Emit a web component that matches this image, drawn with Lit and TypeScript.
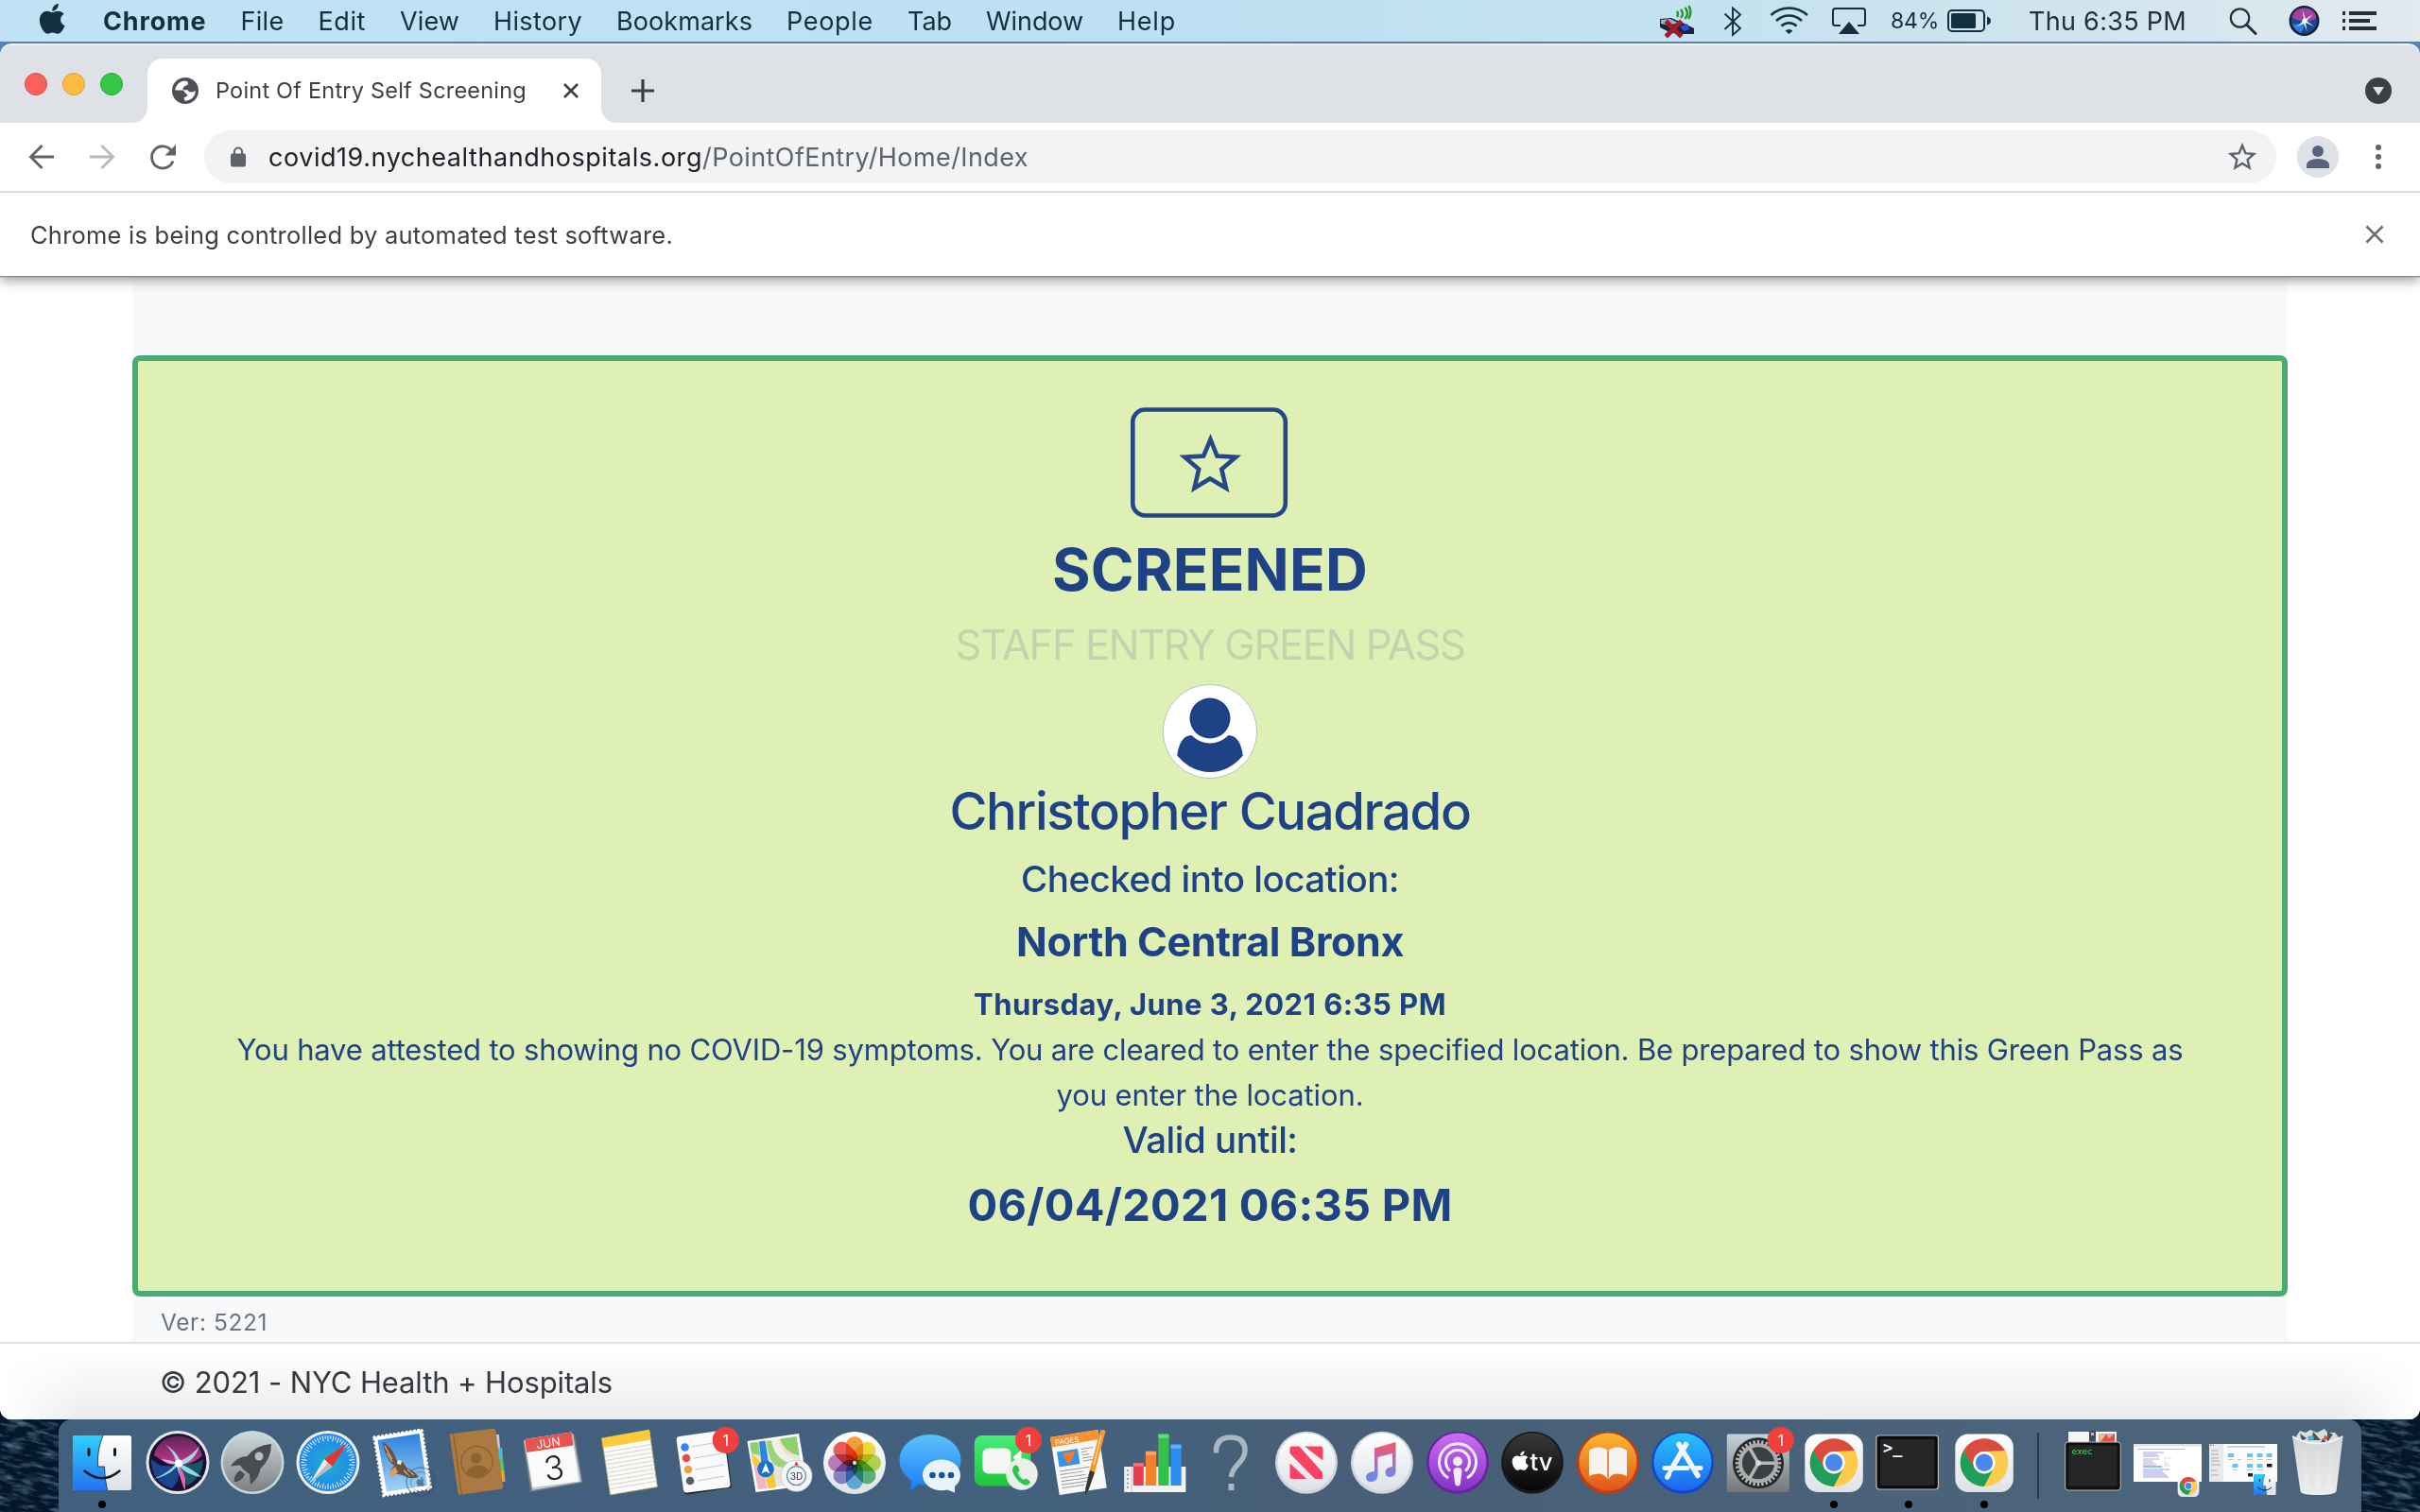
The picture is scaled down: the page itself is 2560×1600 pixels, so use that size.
import { LitElement, html, svg, css, TemplateResult, SVGTemplateResult } from "lit";
import { customElement, property } from "lit/decorators.js";

/** A single line of text whose tracking is adjusted so that it fills a given advance width. */
@customElement("fit-text")
export class FitText extends LitElement {
  @property({ type: Number }) width = 0;
  @property() text = "";

  static styles = css`
    :host { display: inline-block; white-space: pre; }
    .line { display: inline-block; white-space: pre; }
  `;

  updated() {
    const line = this.renderRoot.querySelector<HTMLElement>(".line");
    if (!line || !this.width || !this.text) return;
    line.style.letterSpacing = "0px";
    const natural = line.getBoundingClientRect().width;
    line.style.letterSpacing = `${(this.width - natural) / this.text.length}px`;
  }

  render() {
    return html`<span class="line">${this.text}</span>`;
  }
}

const fit = (text: string, width: number) => html`<fit-text .text=${text} .width=${width}></fit-text>`;

const APPLE =
  "M318.7 268.7c-.2-36.7 16.4-64.4 50-84.8-18.8-26.9-47.2-41.7-84.7-44.6-35.5-2.8-74.3 20.7-88.5 20.7-15 0-49.4-19.7-76.4-19.7C63.3 141.2 4 184.8 4 273.5q0 39.3 14.4 81.2c12.8 36.7 59 126.7 107.2 125.2 25.2-.6 43-17.9 75.8-17.9 31.8 0 48.3 17.9 76.4 17.9 48.6-.7 90.4-82.5 102.6-119.3-65.2-30.7-61.7-90-61.7-91.9zm-56.6-164.2c27.3-32.4 24.8-61.9 24-72.5-24.1 1.4-52 16.4-67.9 34.9-17.5 19.8-27.8 44.3-25.6 71.9 26.1 2 49.9-11.4 69.5-34.3z";

/* ------------------------------------------------------------------ menu bar */

@customElement("menu-bar")
export class MenuBar extends LitElement {
  private menus: [string, number][] = [
    ["File", 46], ["Edit", 50.5], ["View", 63], ["History", 94], ["Bookmarks", 144],
    ["People", 92], ["Tab", 47], ["Window", 103], ["Help", 62],
  ];

  static styles = css`
    :host {
      display: flex; align-items: center; justify-content: space-between;
      height: 44px; padding: 0 46px 0 41px; box-sizing: border-box;
      background: linear-gradient(90deg, #bfe3f4 0%, #bde0f2 50%, #c5e2ef 72%, #d3e5ee 88%, #e2e9ef 100%);
      color: #12303f; font-size: 27px; line-height: 45px;
    }
    svg { display: block; }
    .menus { display: flex; align-items: center; gap: 36px; }
    .apple { width: 28px; height: 44px; margin-right: 4px; }
    .app { font-weight: 700; }
    .status {
      display: grid; align-items: center;
      grid-template-columns: 67px 49px 66px 62px 60px 86px 212px 63px 57px 36px;
    }
    .small { font-size: 23px; }
    .right { color: #22323c; }
  `;

  render() {
    return html`
      <div class="menus">
        <svg class="apple" viewBox="0 0 28 44"><path fill="#12303f" transform="translate(.6 1.8) scale(.0707)" d=${APPLE} /></svg>
        <span class="app">${fit("Chrome", 109.5)}</span>
        ${this.menus.map(([label, w]) => html`<span>${fit(label, w)}</span>`)}
      </div>
      <div class="status">
        <svg width="36" height="44" viewBox="0 0 36 44">
          <path d="M0 20l12-1 14 6 10 5v6h-12l-12-1-12-6z" fill="#1a2440" />
          <path d="M1 21l10-1 8 4-9 3-9-2z" fill="#9db4c0" /><path d="M21 28l8-3 2 6-6 2z" fill="#2b4fd0" />
          <path d="M18 12q2 3 0 6M22 10q4 5 0 9M26.500 8q5 6 0 12M30.500 6q4 7-.5 14" fill="none" stroke="#1f9a28" stroke-width="2.400" />
          <path d="M8 24l13 13M21 24l-13 13" stroke="#a81828" stroke-width="5" stroke-linecap="square" />
        </svg>
        <svg width="20" height="44" viewBox="0 0 20 44"><path d="M1.500 14.500L18 30l-8 7V8.500l8 7L1.500 31" fill="none" stroke="#12303f" stroke-width="1.900" /></svg>
        <svg width="42" height="44" viewBox="0 0 42 44">
          <g fill="none" stroke="#12303f" stroke-width="2.600">
            <path d="M1.500 16q8.300-7.500 19-7.500T40 16" /><path d="M7 22q6-5.500 13.500-5.500T34 22" /><path d="M12.500 27.500q3.500-3.300 8-3.300t8 3.300" />
          </g>
          <path d="M16.500 32.500q4-3 8 0l-4 3.500z" fill="#12303f" />
        </svg>
        <svg width="36" height="44" viewBox="0 0 36 44">
          <path d="M9 27H3.500Q1 27 1 24.500V11.500Q1 9 3.500 9H32.500Q35 9 35 11.500V24.500Q35 27 32.500 27H27" fill="none" stroke="#12303f" stroke-width="2" />
          <path d="M18 23L29 36H7z" fill="#12303f" />
        </svg>
        <span class="small">${fit("84%", 51)}</span>
        <svg width="46" height="44" viewBox="0 0 46 44">
          <rect x="1" y="11" width="38" height="22" rx="4" fill="none" stroke="#12303f" stroke-width="2" />
          <rect x="4" y="14" width="26" height="16" rx="1.500" fill="#12303f" /><path d="M42 17.500q4 1 4 4.500t-4 4.500z" fill="#12303f" />
        </svg>
        <span class="right">${fit("Thu 6:35 PM", 167)}</span>
        <svg width="30" height="44" viewBox="0 0 30 44"><circle cx="11.500" cy="19" r="9.700" fill="none" stroke="#22323c" stroke-width="2.200" /><path d="M18.500 26l9.500 9.500" stroke="#22323c" stroke-width="3" stroke-linecap="round" /></svg>
        <svg width="33" height="44" viewBox="0 0 33 44">
          <circle cx="16.500" cy="22" r="16" fill="#16203a" /><circle cx="16.500" cy="22" r="13.500" fill="#1d4690" />
          <path d="M3.500 18Q6 8.500 16.500 8.500T29.500 18Q25 24 16.500 22Q9 23 3.500 18z" fill="#a4409f" />
          <path d="M4 25Q12 27 17 22Q17 29 13 35Q6 32 4 25z" fill="#2f7fd6" />
          <path d="M6.500 29Q14 25 16 20L14.500 10L18 20L26 15L19 22L27 28L18 24L19.500 33L16 25z" fill="#c9f1fb" />
          <circle cx="17" cy="22" r="2.500" fill="#fff" />
        </svg>
        <svg width="36" height="44" viewBox="0 0 36 44" fill="#22303a">
          <path d="M0 12h3v4H0zM7 12h29v4H7zM0 20h3v4H0zM7 20h22v4H7zM0 28h3v4H0zM7 28h29v4H7z" />
        </svg>
      </div>
    `;
  }
}

/* ------------------------------------------------------------ browser chrome */

@customElement("browser-chrome")
export class BrowserChrome extends LitElement {
  static styles = css`
    :host { display: block; color: #3c4043; position: relative; z-index: 1; }
    svg { display: block; flex: none; }
    .strip {
      display: flex; align-items: flex-end; height: 84px; box-sizing: border-box;
      background: #dee1e6; border-radius: 12px 12px 0 0; box-shadow: inset 0 2px 0 #eff1f4;
    }
    .lights { display: flex; gap: 16px; padding: 0 10px 29px 26px; }
    .light { width: 24px; height: 24px; border-radius: 50%; box-sizing: border-box; }
    .red { background: #fc605b; border: 1px solid #e2473f; }
    .amber { background: #fdbc40; border: 1px solid #dfa032; }
    .green { background: #34c748; border: 1px solid #24a732; }
    .flare { width: 16px; height: 16px; }
    .flare.l { background: radial-gradient(circle at 0 0, #dee1e6 15.500px, #fff 16.200px); }
    .flare.r { background: radial-gradient(circle at 100% 0, #dee1e6 15.500px, #fff 16.200px); }
    .tab {
      display: flex; align-items: center; width: 480px; height: 68px; box-sizing: border-box;
      padding: 0 24px 0 26px; background: #fff; border-radius: 16px 16px 0 0; font-size: 23.500px;
    }
    .title { flex: 1; padding-left: 18px; line-height: 66px; margin-top: -1px; }
    .plus { padding: 0 0 22px 16px; }
    .search { margin-left: auto; padding: 0 30px 20px 0; }
    .toolbar {
      display: flex; align-items: center; gap: 36px; height: 72px; padding: 0 30px 0 30px;
      background: #fff; border-bottom: 2px solid #dadce0;
    }
    .omnibox {
      display: flex; align-items: center; flex: 1; height: 56px; margin-left: -6px;
      margin-right: -14px; padding: 0 20px 0 28px; border-radius: 28px;
      background: #f1f3f4; box-sizing: border-box; font-size: 27px; color: #202124;
    }
    .url { flex: 1; display: flex; padding-left: 24px; }
    .path { color: #5f6368; }
    .avatar { margin-right: -8px; }
    .infobar {
      display: flex; align-items: center; justify-content: space-between; height: 88px;
      padding: 0 38px 0 32px; background: #fff; font-size: 25.500px; box-sizing: border-box;
      box-shadow: 0 1px 1px #858585, 0 4px 12px rgba(0, 0, 0, .42);
      clip-path: inset(0 0 -20px 0);
    }
  `;

  render() {
    return html`
      <div class="strip">
        <div class="lights"><i class="light red"></i><i class="light amber"></i><i class="light green"></i></div>
        <i class="flare l"></i>
        <div class="tab">
          <svg width="28" height="28" viewBox="0 0 28 28">
            <circle cx="14" cy="14" r="14" fill="#4d5156" />
            <path d="M3.400 13.600C3.600 8 8 4 13 3.400L16.300 4.200C17.800 7 16.500 8.400 14 8.600L13.600 9.200Q11.500 9.600 11.300 13.200H16.500Q17.300 15.500 20 15.600Q22 15.600 24.700 14C24.600 20 20.500 24.600 13.500 24.700L12.600 21.300Q16.300 20.500 16.500 18.300Q14.500 17.500 13.500 15.500Q12.500 13.800 10.500 13.600z" fill="#fff" />
          </svg>
          <span class="title">${fit("Point Of Entry Self Screening", 329)}</span>
          <svg width="16" height="16" viewBox="0 0 16 16"><path d="M1 1l14 14M15 1L1 15" stroke="#3c4043" stroke-width="2.600" /></svg>
        </div>
        <i class="flare r"></i>
        <div class="plus"><svg width="24" height="24" viewBox="0 0 24 24"><path d="M12 0v24M0 12h24" stroke="#3c4043" stroke-width="3.200" /></svg></div>
        <div class="search"><svg width="28" height="28" viewBox="0 0 28 28"><circle cx="14" cy="14" r="14" fill="#3c4043" /><path d="M8 10h12l-6 9z" fill="#dee1e6" /></svg></div>
      </div>
      <div class="toolbar">
        <svg width="28" height="28" viewBox="0 0 28 28"><path d="M27 14H3M14.500 2L2.500 14l12 12" fill="none" stroke="#5f6368" stroke-width="2.800" /></svg>
        <svg width="28" height="28" viewBox="0 0 28 28"><path d="M1 14h24M13.500 2l12 12-12 12" fill="none" stroke="#bababa" stroke-width="2.800" /></svg>
        <svg width="28" height="28" viewBox="0 0 28 28"><path d="M23.500 7.500A11.600 11.600 0 1 0 25 18.500" fill="none" stroke="#5f6368" stroke-width="2.800" /><path d="M28 1v11.500H16.500z" fill="#5f6368" /></svg>
        <div class="omnibox">
          <svg width="16" height="24" viewBox="0 0 16 24"><rect y="8.500" width="16" height="14" rx="2" fill="#5f6368" /><path d="M4 9V6.500a4 4 0 0 1 8 0V9" fill="none" stroke="#5f6368" stroke-width="2" /></svg>
          <div class="url"><span>${fit("covid19.nychealthandhospitals.org", 459)}</span><span class="path">${fit("/PointOfEntry/Home/Index", 345)}</span></div>
          <svg width="32" height="32" viewBox="0 0 32 32"><path d="M16 4l3.400 8.200 8.900.8-6.700 5.900 2 8.700L16 23l-7.600 4.600 2-8.700L3.700 13l8.900-.8z" fill="none" stroke="#5f6368" stroke-width="2.400" /></svg>
        </div>
        <svg class="avatar" width="44" height="44" viewBox="0 0 44 44"><circle cx="22" cy="22" r="22" fill="#dee1e6" /><circle cx="22" cy="16" r="6" fill="#56627a" /><path d="M10 34v-3.500Q11 24 22 24t12 6.500V34z" fill="#56627a" /></svg>
        <svg width="28" height="28" viewBox="0 0 28 28" fill="#5f6368"><circle cx="14" cy="4" r="3" /><circle cx="14" cy="14" r="3" /><circle cx="14" cy="24" r="3" /></svg>
      </div>
      <div class="infobar">
        ${fit("Chrome is being controlled by automated test software.", 680)}
        <svg width="20" height="20" viewBox="0 0 20 20"><path d="M1.500 1.500l17 17M18.500 1.500l-17 17" stroke="#6b6f73" stroke-width="2.600" /></svg>
      </div>
    `;
  }
}

/* ---------------------------------------------------------------- green pass */

@customElement("green-pass")
export class GreenPass extends LitElement {
  static styles = css`
    :host { display: flex; flex-direction: column; flex: 1; min-height: 0; background: #fff; }
    .container {
      display: flex; flex-direction: column; flex: none; width: 2280px; height: 1128px; margin: 0 auto;
      padding-top: 84px; box-sizing: border-box; background: #f8f9fb;
    }
    .card {
      display: flex; flex-direction: column; align-items: center; flex: none; height: 996px;
      box-sizing: border-box; padding-top: 49px; border: 6px solid #4cab75;
      border-radius: 8px; background: #dff0b5; color: #1f4287; text-align: center;
    }
    svg { display: block; flex: none; }
    .screened { margin-top: 17px; font-size: 62px; font-weight: 700; line-height: 76px; }
    .kind { font-size: 43.500px; line-height: 83px; color: #c0d4ae; }
    .name { font-size: 54.500px; font-weight: 500; line-height: 68px; }
    .label { font-size: 38.500px; font-weight: 500; line-height: 76px; }
    .place { font-size: 43px; font-weight: 700; line-height: 56px; }
    .when { margin-top: 14px; font-size: 31px; font-weight: 700; line-height: 49px; }
    .note { font-size: 31px; line-height: 48px; }
    .valid { font-size: 38.500px; font-weight: 500; line-height: 46px; }
    .until { font-size: 47px; font-weight: 700; line-height: 92px; }
    .version { height: 48px; padding-left: 30px; font-size: 24.500px; line-height: 54px; color: #6c757d; }
    .footer {
      flex: 1; padding-left: 169px; border-top: 2px solid #dee2e6; color: #343a40;
      font-size: 31px; line-height: 81px; border-radius: 0 0 12px 12px;
      background:
        linear-gradient(90deg, #fff, rgba(255, 255, 255, 0) 90px, rgba(255, 255, 255, 0) calc(100% - 90px), #fff),
        linear-gradient(#fff 10%, #f7f7f7 45%, #ebebeb 100%);
    }
  `;

  render() {
    return html`
      <div class="container">
        <div class="card">
          <svg width="168" height="117" viewBox="0 0 168 117">
            <rect x="2.300" y="2.500" width="161.500" height="112" rx="13" fill="none" stroke="#26468a" stroke-width="4.600" />
            <path d="M84.500 34l7 17.500 19.800 1.200-15 12.800 4.700 20L84 75.500 67.500 85.500l4.700-20-15-12.800 20-1.200z" fill="none" stroke="#26468a" stroke-width="4.600" />
          </svg>
          <div class="screened">${fit("SCREENED", 334)}</div>
          <div class="kind">${fit("STAFF ENTRY GREEN PASS", 539)}</div>
          <svg width="100" height="100" viewBox="0 0 100 100">
            <circle cx="50" cy="50" r="49.600" fill="#fff" stroke="#8ea0a8" stroke-width=".6" />
            <ellipse cx="50" cy="36" rx="21.500" ry="21.500" fill="#1f4287" />
            <path d="M30.500 54Q39 62.500 50 62.500T69.500 54Q82 54.500 84.800 75.500Q70 93 50 93T15.200 75.500Q18 54.500 30.500 54z" fill="#1f4287" />
          </svg>
          <div class="name">${fit("Christopher Cuadrado", 551)}</div>
          <div class="label">${fit("Checked into location:", 400)}</div>
          <div class="place">${fit("North Central Bronx", 410)}</div>
          <div class="when">${fit("Thursday, June 3, 2021 6:35 PM", 500)}</div>
          <div class="note">${fit("You have attested to showing no COVID-19 symptoms. You are cleared to enter the specified location. Be prepared to show this Green Pass as", 2059)}</div>
          <div class="note">${fit("you enter the location.", 325)}</div>
          <div class="valid">${fit("Valid until:", 185)}</div>
          <div class="until">${fit("06/04/2021 06:35 PM", 513)}</div>
        </div>
        <div class="version">${fit("Ver: 5221", 113)}</div>
      </div>
      <div class="footer">${fit("© 2021 - NYC Health + Hospitals", 479)}</div>
    `;
  }
}

/* ---------------------------------------------------------------------- dock */

interface DockItem {
  art: SVGTemplateResult;
  running?: boolean;
}

const finderFace = svg`
  <rect x="9" y="17" width="62" height="58" rx="2.500" fill="url(#white)" />
  <path d="M11.500 17H41C36 29 35 40 35.500 50H42.500Q42.500 62 45.500 75H11.500Q9 75 9 72.500V19.500Q9 17 11.500 17z" fill="url(#sky)" />
  <path d="M41 17C36 29 35 40 35.500 50H42.500Q42.500 62 45.500 75" fill="none" stroke="#2a3f55" stroke-width="1" />
  <path d="M26 31.500v6M53.500 31.500v6" stroke="#101820" stroke-width="3" stroke-linecap="round" />
  <path d="M21.500 54.500Q40 70 58.500 54.500" fill="none" stroke="#101820" stroke-width="2.400" stroke-linecap="round" />`;

const chromeMark = svg`
  <rect x="9.300" y="15.500" width="61.500" height="61.500" rx="14" fill="url(#white)" />
  <circle cx="40" cy="45.700" r="25.300" fill="#fdcb4b" />
  <path d="M18.100 33A25.300 25.300 0 0 1 61.900 33L40 34L29 52z" fill="#db4b40" />
  <path d="M18.100 33A25.300 25.300 0 0 0 40 71L51 52L40 56L30 51.700z" fill="#1f9d5b" />
  <path d="M40 34.200H62.500A25.300 25.300 0 0 1 40 71L50 51.500z" fill="#fdcb4b" />
  <circle cx="40" cy="45.700" r="11.700" fill="#fff" /><circle cx="40" cy="45.700" r="9.200" fill="#4a86ec" />`;

const badge = (x: number) => svg`
  <circle cx=${x} cy="22" r="14" fill="#f0403d" />
  <text x=${x} y="27.700" font-size="16" fill="#fff" text-anchor="middle">1</text>`;

const disc = (fill: string, rim: string) => svg`
  <circle cx="40" cy="45.700" r="33" fill=${rim} /><circle cx="40" cy="45" r="30.500" fill=${fill} />`;

const petals = ["#f9a13a", "#f6e13b", "#bfdc52", "#63c07f", "#6bb6e6", "#8f8fd0", "#c784bf", "#f1605a"];

const ticks = Array.from({ length: 60 }, (_, i) => i * 6);
const teeth = Array.from({ length: 32 }, (_, i) => i * 11.25);

const rows = (x: number, y: number, n: number, step: number, w: number, color: string) =>
  Array.from({ length: n }, (_, i) => svg`<path d="M${x} ${y + i * step}h${w - ((i * 7) % 9)}" stroke=${color} stroke-width="1" />`);

const items: DockItem[] = [
  { running: true, art: finderFace },
  {
    art: svg`
      <circle cx="40" cy="45.500" r="33.500" fill="#e8e6ea" /><circle cx="40" cy="45.500" r="30.500" fill="#191333" />
      <path d="M15 38Q20 18 42 17.500Q60 19 66 38Q54 50 41 47Q26 46 15 38z" fill="url(#siriPink)" />
      <path d="M12 42Q24 54 40 47Q45 62 34 73Q12 67 12 42z" fill="#1c4f9c" opacity=".85" />
      <path d="M40 46Q58 50 67 42Q66 62 50 70Q46 58 40 46z" fill="#1b6f86" opacity=".7" />
      <path d="M14.500 63Q32 56 38.500 46Q36 34 26 26Q39 34 42.500 44Q56 38 63 28Q58 44 45 48Q56 53 65 61Q50 59 42 50Q50 62 47.500 74Q43 62 39 50Q30 60 14.500 63z" fill="#9fe9ee" opacity=".9" />
      <path d="M41 49Q51 62 47.500 75Q42 62 41 49z" fill="#f05fae" /><path d="M22 42Q34 43 41 46.500Q32 50 22 42z" fill="#e6d6ff" opacity=".8" /><circle cx="41" cy="46.500" r="4" fill="#fff" />`,
  },
  {
    art: svg`
      <circle cx="40" cy="45.500" r="33.500" fill="#c9d8dc" /><circle cx="40" cy="45.500" r="31" fill="url(#steel)" />
      <path d="M60 26Q44 27 34.500 39Q24 39 17 49.500L27 48.500L30 52.500L37 58L38 69Q47 62 48.500 52Q60 42 60 26z" fill="#4a4c4f" />
      <circle cx="47" cy="39" r="4.500" fill="#b2bec1" /><path d="M27 54Q20 58 21 66Q29 66 32 58z" fill="#4a4c4f" />`,
  },
  {
    art: svg`
      <circle cx="40" cy="45.500" r="33.500" fill="#eef0f2" /><circle cx="40" cy="45.500" r="30.500" fill="url(#safari)" />
      ${ticks.map((a) => svg`<path d="M40 17V${a % 12 ? 20.5 : 23}" stroke="#d8f0ff" stroke-width="1.100" transform="rotate(${a} 40 45.500)" />`)}
      <path d="M60.500 25L44.500 50L36 42z" fill="#e8332f" /><path d="M21 67L44.500 50L36 42z" fill="#eceef0" /><path d="M21 67L44.500 50L40 46z" fill="#b5bcc2" />`,
  },
  {
    art: svg`
      <path d="M9 19L59 11L68.500 73L19 80.500z" fill="#fff" stroke="#fff" stroke-width="3.400" stroke-dasharray="0.100 4.200" stroke-linecap="round" />
      <path d="M12.500 22L56.500 15L65 70L22 76.500z" fill="url(#mail)" />
      <path d="M18 24Q26 28 30 37L34 46Q36 43 39 45L43 51Q52 55 56 61Q48 64 41 60L35 58L29 58L26 54L30 49Q20 42 18 24z" fill="#6d5340" />
      <path d="M20 28q4 8 8 14M22 36l6 9M44 53l7 6M40 54l6 6" stroke="#cdbb9f" stroke-width="1.200" />
      <path d="M24 56L31 50L34 56L28 61z" fill="#d8a05a" /><path d="M34 43l4 1-1 4-4-1z" fill="#f2f2ee" />
      <circle cx="58" cy="66" r="15" fill="none" stroke="#334a63" stroke-width="1.600" opacity=".45" /><circle cx="58" cy="66" r="10.500" fill="none" stroke="#334a63" stroke-width="1" opacity=".4" />
      <path fill="#334a63" opacity=".6" transform="translate(53.500 60) scale(.023)" d=${APPLE} />`,
  },
  {
    art: svg`
      <path d="M56 16h6l1 15h-6z" fill="#c9cdd0" /><path d="M58 30h7l1 12h-7z" fill="#4db9dc" /><path d="M59 42h7l1.500 12h-7z" fill="#4fc66a" /><path d="M60 54h7.500l1 12h-7z" fill="#f0a02c" />
      <path d="M9.600 17Q9.600 15.500 11 15.300L55 9.800Q58 9.500 58.500 12.500L66 70Q66.500 73 64 73.700L21 79.700Q18.800 80 18.500 77.500z" fill="#ab7a42" />
      <path d="M13.500 15L22.500 79.500" stroke="#8f6331" stroke-width="1.400" />
      <circle cx="38.500" cy="45" r="16.500" fill="none" stroke="#8d6332" stroke-width="1.500" /><circle cx="37.500" cy="41" r="5.700" fill="#8d6332" /><path d="M27 56.500Q29.500 49.500 38.500 49T51 54.500Q40 67 27 56.500z" fill="#8d6332" />`,
  },
  {
    art: svg`
      <path d="M7.500 24L62 16L70.500 67L15 77z" fill="#6f7b84" /><path d="M8 22L60 15L69 66L17 75z" fill="#c4c9cd" />
      <path d="M9 21L58.500 13.500L66.500 65.500L17.500 72z" fill="#fafafa" /><path d="M9 21L58.500 13.500L60.500 27.500L11.300 35z" fill="#e8524f" />
      <g transform="rotate(-8 38 44)"><text x="36.500" y="29" font-size="12.500" fill="#fff" text-anchor="middle">JUN</text><text class="thin" x="39" y="64" font-size="35" fill="#222" text-anchor="middle">3</text></g>`,
  },
  {
    art: svg`
      <path d="M11.500 20L61.900 11L70.500 71.500L20.500 80z" fill="#fbfbf7" stroke="#a99a55" stroke-width=".8" />
      <path d="M11.500 20L61.900 11L63.300 21.500L13 30z" fill="#fbcb3c" />
      ${Array.from({ length: 10 }, (_, i) => svg`<path d="M${14 + i * 0.65} ${35 + i * 4.3}L${64 + i * 0.65} ${26.5 + i * 4.3}" stroke="#cfcfcb" stroke-width=".9" />`)}`,
  },
  {
    art: svg`
      <path d="M12 24L62 18L69 72L23 79.500Q19 80 18.500 76z" fill="#23262b" />
      <path d="M10.600 22Q10.300 18.500 13.500 18L56 12Q60 11.500 60.500 15L67.500 68Q68 71.500 65 72L22 77.500Q18.500 78 18 74.500z" fill="#fafafa" />
      <circle cx="19.500" cy="29.500" r="4.300" fill="#3a82f6" /><circle cx="21" cy="41" r="4.300" fill="#e94f49" /><circle cx="23" cy="53" r="4.300" fill="#f0a040" /><circle cx="25" cy="65" r="4.300" fill="#5a5f69" />
      <path d="M27 29l22-4M29 41l30-5M30.500 53l30-5M32.500 65l29-5" stroke="#c7c9cc" stroke-width="1.200" />${badge(62.7)}`,
  },
  {
    art: svg`
      <path d="M5.500 23L60 15L69.500 70L14.500 77z" fill="#fff" />
      <path d="M8 25L57.500 18L66 67L16.500 74z" fill="#e9e4d8" />
      <path d="M40 20.500L57.500 18L60.500 38Q46 36 40 20.500z" fill="#8fd06d" /><path d="M8 25L17 24L19 38L10 36z" fill="#8fd06d" /><path d="M26 23l9-1.300Q38 40 55 44l8 1 2 10L38 50Q28 46 26 23z" fill="#97d578" />
      <path d="M31 22l7-1Q42 40 61 43l1 6Q34 46 31 22z" fill="#f3f0e8" />
      <path d="M10 36l24 22 2 14-8 1L24 58 11 46z" fill="#f8c73a" /><path d="M12 46l12 14 2 13-9 1z" fill="#f4b4c4" />
      <path d="M18 23.500l6.500-1 4.500 30h-8z" fill="#2a87dd" /><circle cx="25" cy="52.500" r="8.800" fill="#1671cf" /><path d="M25 46l4.500 11.500L25 55l-4.500 2.500z" fill="#fff" />
      <circle cx="57.500" cy="59.700" r="16.500" fill="#f3f5f6" stroke="#c3c9ce" stroke-width=".8" /><circle cx="57.500" cy="59.700" r="10" fill="none" stroke="#5e8da6" stroke-width="1.200" />
      <path d="M57.500 44.500l2.300 4h-4.600z" fill="#e02b2b" /><text x="57.500" y="63.600" font-size="10" fill="#30353a" text-anchor="middle">3D</text>`,
  },
  {
    art: svg`
      <circle cx="40" cy="46" r="33" fill="url(#white)" />
      ${petals.map((c, i) => svg`<rect class="petal" x="31" y="18" width="18" height="29" rx="9" fill=${c} transform="rotate(${i * 45} 40 46)" />`)}
      <circle cx="40" cy="46" r="2" fill="#fff" />`,
  },
  {
    art: svg`
      <path d="M40 16C58 16 72.500 28 72.500 43S58 70 40 70Q33 70 28 68Q24 73 18 75Q21 70 20 64.500Q7.500 56 7.500 43C7.500 28 22 16 40 16z" fill="url(#msg)" />
      <path d="M52 42.500C63 42.500 72 49.500 72 59Q72 66 66 71L66 77.500L58 74.500Q56 75.300 52 75.300C41 75.300 32 68 32 59S41 42.500 52 42.500z" fill="#e9f3fb" />
      <circle cx="42.500" cy="59" r="3.300" fill="#17529c" /><circle cx="52.300" cy="59" r="3.300" fill="#17529c" /><circle cx="62" cy="59" r="3.300" fill="#17529c" />`,
  },
  {
    art: svg`
      <rect x="6.800" y="17" width="59.500" height="53.500" rx="8" fill="url(#green)" /><rect x="15.500" y="30.500" width="30" height="27" rx="6" fill="#f3f6f3" />
      <path d="M47.500 40l9-8v20z" fill="#f3f6f3" /><circle cx="57" cy="58" r="16.800" fill="#e9efe9" />
      <path d="M48 50q3-3 5 0l1.500 4-2 2.500q2 5 6 7.500l3-1.500 3.500 2.500q2 2-1 4-3 2-8-1.500-6-5-8.500-11.500-1-4 .5-6z" fill="#27c94b" />${badge(64)}`,
  },
  {
    art: svg`
      <path d="M8 19L58.500 11L67.800 72.500L17.700 80z" fill="#f8f8f8" /><path d="M8 19L58.500 11L60 21L9.700 29.500z" fill="#f9922e" />
      <text transform="rotate(-8.500 13 27)" x="13.500" y="27.500" font-size="8" fill="#fff">PAGES</text>
      <path d="M15 34.500L37 31L39.500 47L17.500 50.500z" fill="#3794e2" /><path d="M21 36q7-2 13-2-1 8-7 13-4-5-6-11z" fill="#f5792c" />
      <g transform="rotate(-8.500 18 56)">${rows(18, 55, 6, 3.6, 32, "#9a9a9a")}${rows(44, 35, 5, 3.2, 13, "#9a9a9a")}</g>
      <path d="M61 11.500q4-1.500 5.500 1L54 60l-6 16-3.500 5 1-9L49 56z" fill="#f2982e" /><path d="M50 54l5 2-7 20-3.500 5 1-9z" fill="#33363a" /><path d="M62 17l-8 31" stroke="#ffd69a" stroke-width="1.400" />`,
  },
  {
    art: svg`
      <rect x="6.200" y="50" width="65.200" height="27" fill="#f2f2f2" /><path d="M14 50v27" stroke="#c8c8c8" /><path d="M9 54h2M9 58.500h2M9 63h2M9 67.500h2M9 72h2" stroke="#888" stroke-width="1.300" />
      <rect x="15.800" y="45.700" width="11" height="24.300" rx="1" fill="#e63b52" /><rect x="28.900" y="33.500" width="11.300" height="36.500" rx="1" fill="#f1812b" />
      <rect x="42.300" y="15" width="11.300" height="55" rx="1" fill="#32c24c" /><rect x="55.400" y="26" width="11.300" height="44" rx="1" fill="#2b8df2" />
      <path d="M15.800 48h11M28.900 36h11.300M42.300 18h11.300M55.400 29h11.300" stroke="#fff" stroke-width="3.500" opacity=".3" />`,
  },
  {
    art: svg`
      <path d="M23.500 35.500V33Q24 19 39 19T54 33Q54 40 47 47T39.500 61" fill="none" stroke="#aab6c1" stroke-width="5.500" /><rect x="36.500" y="68" width="6" height="7" fill="#aab6c1" />`,
  },
  {
    art: svg`${disc("url(#white)", "#cfd5db")}
      <path d="M24.500 28.500h8L57 56v7h-8L22.500 36v-5.500q0-2 2-2z" fill="#fb4265" /><path d="M38 28.500h17q2.500 0 2.500 2.500v12.500zM22.500 46.500L40.500 63H24.500q-2 0-2-2z" fill="#fb4265" />`,
  },
  {
    art: svg`${disc("url(#white)", "#cfd5db")}
      <path d="M32 30.500L54.500 24V54Q54.500 61 48.500 61Q43.500 61 43.500 56Q43.500 51 51 50V36L35.500 40V59Q35 66 28.500 66Q23 66 23 61Q23 56 32 55z" fill="url(#tune)" />`,
  },
  {
    art: svg`${disc("url(#violet)", "#64249b")}
      <g fill="none" stroke="#f4ecfb" stroke-width="3"><path d="M30 62A19.500 19.500 0 1 1 50 62" /><path d="M32 54.500A12.500 12.500 0 1 1 48 54.500" /></g>
      <circle cx="40" cy="44.500" r="5" fill="#f4ecfb" /><path d="M35.500 55q0-4 4.500-4t4.500 4l-1.500 12q-.5 3.500-3 3.500t-3-3.500z" fill="#f4ecfb" />`,
  },
  {
    art: svg`${disc("url(#black)", "#191919")}
      <path fill="#fff" transform="translate(18.500 32) scale(.0455)" d=${APPLE} /><text x="37.500" y="54.500" font-size="25" font-weight="500" fill="#fff" textLength="24" lengthAdjust="spacingAndGlyphs">tv</text>`,
  },
  {
    art: svg`${disc("url(#orange)", "#c53c12")}
      <path d="M40 33Q36 29.500 30 29.500T20 33V60Q24 57.500 30 57.500T39 62.500h2Q44 57.500 50 57.500T60 60V33Q56 29.500 50 29.500T40 33z" fill="#f7f4f0" /><path d="M40 33v29" stroke="#e2712a" stroke-width="1.600" />`,
  },
  {
    art: svg`${disc("url(#blue)", "#1347c8")}
      <path d="M43.500 26.500L27.500 53.500M36 26.500L56 59.500M25.500 58l-1.700 3" stroke="#f2f6fc" stroke-width="5.500" stroke-linecap="round" /><path d="M21 51.500H45M52 51.500h7" stroke="#f2f6fc" stroke-width="5" stroke-linecap="round" />`,
  },
  {
    art: svg`
      <rect x="6.800" y="15.500" width="66" height="61.500" rx="2" fill="url(#steel2)" /><circle cx="40" cy="46.300" r="27" fill="#262829" />
      ${teeth.map((a) => svg`<rect x="38.800" y="22" width="2.400" height="6" fill="#b4b7b7" transform="rotate(${a} 40 46.300)" />`)}
      <circle cx="40" cy="46.300" r="19" fill="#3c3f41" stroke="#a9adad" stroke-width="4" /><path d="M40 46.300H58M40 46.300L31 30.700M40 46.300L31 62" stroke="#b4b7b7" stroke-width="3.500" /><circle cx="40" cy="46.300" r="3" fill="#d8dada" />${badge(63.7)}`,
  },
  { running: true, art: chromeMark },
  {
    running: true,
    art: svg`
      <rect x="5.900" y="17" width="65.500" height="57" rx="3" fill="#0d0d0d" stroke="#b9bdc0" stroke-width="1.200" /><rect x="10" y="21" width="57.500" height="49" fill="#262626" />
      <text class="mono" x="13" y="36" font-size="17" font-weight="700" fill="#fff">&gt;_</text>`,
  },
  { running: true, art: chromeMark },
];

const stacks: SVGTemplateResult[] = [
  svg`
    <path d="M14 13H65V25H14z" fill="#f5f5f5" /><path d="M36 12h7v12h-7z" fill="#444b52" /><path d="M38 14h3v3h-3z" fill="#b9c3cb" /><path d="M46 15h17v9H46z" fill="#e79fc0" /><path d="M48 24l6-8 3 4 6-5v9z" fill="#d8543c" /><path d="M46 15l6 2-3 5z" fill="#e8d44a" />
    <rect x="10.700" y="24" width="58.500" height="51" rx="3" fill="#101010" stroke="#b9bdc0" stroke-width="1" /><rect x="14.500" y="27.500" width="51" height="43" fill="#262626" />
    <text class="mono" x="17.500" y="37" font-size="9.500" fill="#4fd36b" textLength="22">exec</text>`,
  svg`
    <rect x="4" y="26" width="72" height="40" fill="#fff" /><path d="M4 26h72v2.500H4z" fill="#dfe2e6" /><path d="M8 31.500h50" stroke="#b8bcc2" stroke-width="1.200" />
    ${rows(14, 35, 3, 2, 22, "#a8a1e2")}${rows(14, 42, 4, 2, 17, "#b0abe4")}<path d="M14 50h20" stroke="#79b2d0" stroke-width="1.600" />${rows(14, 53, 5, 2, 28, "#a19ddf")}${rows(36, 41, 5, 2, 8, "#dcdcdc")}
    <g transform="translate(47.200 53.500) scale(.37)">${chromeMark}</g>`,
  svg`
    <rect x="4" y="26" width="72" height="40" fill="#fbfbfb" /><path d="M4 26h15v40H4z" fill="#e8e9eb" /><path d="M5 27.300h1.500" stroke="#f45" stroke-width="1.500" /><path d="M7.500 27.300H9" stroke="#4c5" stroke-width="1.500" />
    <path d="M23 29h40" stroke="#c3c5c8" stroke-width="1.600" /><path d="M6 33h7M6 37h8M6 41h8M6 44h9M6 48h10M6 54h6M6 59h8" stroke="#a9acb0" stroke-width="1.200" />
    <g fill="#6cc4ee"><path d="M24 36h6v4h-6zM44 36h6v4h-6zM54.500 36h6v4h-6zM64.500 36h6v4h-6zM28.500 47h6v4h-6zM44 47h6v4h-6zM54.500 47h6v4h-6z" /></g>
    <path d="M65 47h5.500v3.500H65zM45 57h5v3.500h-5z" fill="#1d1d1d" /><path d="M24 42.500h6M34 42.500h4M44 42.500h6M54.500 42.500h6M64.500 42.500h6M29 53.500h5M44 53.500h6M54 53.500h7" stroke="#bbb" stroke-width=".9" />
    <g transform="translate(47.600 51.500) scale(.38)">${finderFace}</g>`,
  svg`
    <path d="M16 18L20 12l6 2 5-3 7 3 8-4 3 4 8 0 4 5-4 8H20z" fill="#d9dde0" /><path d="M20 15l7 5-5 3zM34 13l8 9-10 0zM49 13l6 3-6 8zM44 20l4 4-6 1z" fill="#4d555c" /><path d="M28 18l6-1 1 4-6 2z" fill="#49b8d8" /><path d="M46 17l4 1-1 4-4-1z" fill="#c75a3a" />
    <path d="M12 18Q38 33 65.500 18L58.500 76Q57 80 39 80T20.500 76z" fill="url(#bin)" /><path d="M12 18Q38 33 65.500 18" fill="none" stroke="#f4f6f7" stroke-width="1.600" />
    <path d="M24 30l4 44M39 33v44M54 30l-4 44" stroke="#fff" stroke-width="4" opacity=".16" />`,
];

const gradient = (id: string, from: string, to: string) => svg`
  <linearGradient id=${id} x1="0" y1="0" x2="0" y2="1"><stop offset="0" stop-color=${from} /><stop offset="1" stop-color=${to} /></linearGradient>`;

@customElement("mac-dock")
export class MacDock extends LitElement {
  static styles = css`
    :host {
      display: grid; grid-template-columns: 62px 1fr 62px; height: 98px; background: #05182c;
    }
    .sea { display: block; width: 100%; height: 98px; }
    .shelf {
      display: flex; padding-left: 6px; border-radius: 14px 14px 0 0; overflow: hidden;
      background: linear-gradient(90deg, #41607e 0%, #43617d 45%, #465f77 52%, #4a637b 80%, #4c647a 100%);
    }
    .cell { display: block; flex: none; width: 79.650px; height: 98px; }
    .defs { flex: none; width: 0; height: 0; }
    .rule { flex: none; width: 2px; height: 70px; margin: 14px 16.500px 0; background: #1f3a56; }
    .petal { mix-blend-mode: multiply; }
    .thin { font-weight: 300; }
    .mono { font-family: "DejaVu Sans Mono", "Liberation Mono", monospace; }
  `;

  private sea(seed: number): TemplateResult {
    return html`
      <svg class="sea" viewBox="0 0 62 98">
        <filter id="waves${seed}" x="0" y="0" width="100%" height="100%">
          <feTurbulence type="fractalNoise" baseFrequency=".05 .2" numOctaves="4" seed=${seed} />
          <feColorMatrix values="0 0 0 0 .2  0 0 0 0 .34  0 0 0 0 .46  1.600 0 0 0 -.72" />
        </filter>
        <rect width="62" height="98" fill="#03162b" />
        <g transform="rotate(12 31 49)"><rect x="-20" y="-20" width="110" height="140" filter="url(#waves${seed})" /></g>
      </svg>
    `;
  }

  private cell(art: SVGTemplateResult, running = false) {
    return html`<svg class="cell" viewBox="0 0 79.650 98">${art}${running ? svg`<circle cx="40" cy="90" r="4" fill="#000" />` : null}</svg>`;
  }

  render() {
    return html`
      ${this.sea(3)}
      <div class="shelf">
        <svg class="defs">
          <defs>
            ${gradient("white", "#ffffff", "#dde2e7")} ${gradient("sky", "#2fd0fd", "#2472f0")}
            ${gradient("steel", "#cdd9dc", "#7e8081")} ${gradient("steel2", "#c3d3dc", "#74777a")}
            ${gradient("mail", "#2c7fe0", "#a5d5f5")} ${gradient("msg", "#5cc2fb", "#1b7df7")}
            ${gradient("green", "#46ee78", "#20c53c")} ${gradient("violet", "#cc6cf4", "#8434c6")}
            ${gradient("black", "#3a3a3a", "#050505")} ${gradient("orange", "#fdb92f", "#e1551c")}
            ${gradient("blue", "#28c3fb", "#1d66f0")} ${gradient("tune", "#fb5468", "#5b8dfb")}
            ${gradient("bin", "#d3d5d7", "#eceded")} ${gradient("siriPink", "#5a2358", "#c8388c")}
            <radialGradient id="safari"><stop offset="0" stop-color="#1fb0c8" /><stop offset="1" stop-color="#2285f0" /></radialGradient>
          </defs>
        </svg>
        ${items.map((item) => this.cell(item.art, item.running))}
        <i class="rule"></i>
        ${stacks.map((art) => this.cell(art))}
      </div>
      ${this.sea(8)}
    `;
  }
}

/* ------------------------------------------------------------------- desktop */

@customElement("app-root")
export class AppRoot extends LitElement {
  static styles = css`
    :host {
      display: flex; flex-direction: column; width: 2560px; height: 1600px; overflow: hidden;
      font-family: Inter, "Liberation Sans", sans-serif; font-optical-sizing: none;
      background: linear-gradient(#4a7099 0, #5b86b4 60px, #04172b 70px);
    }
    .window {
      display: flex; flex-direction: column; height: 1456px; margin-top: 2px;
      border-radius: 12px; overflow: hidden;
    }
  `;

  render() {
    return html`
      <menu-bar></menu-bar>
      <main class="window">
        <browser-chrome></browser-chrome>
        <green-pass></green-pass>
      </main>
      <mac-dock></mac-dock>
    `;
  }
}
